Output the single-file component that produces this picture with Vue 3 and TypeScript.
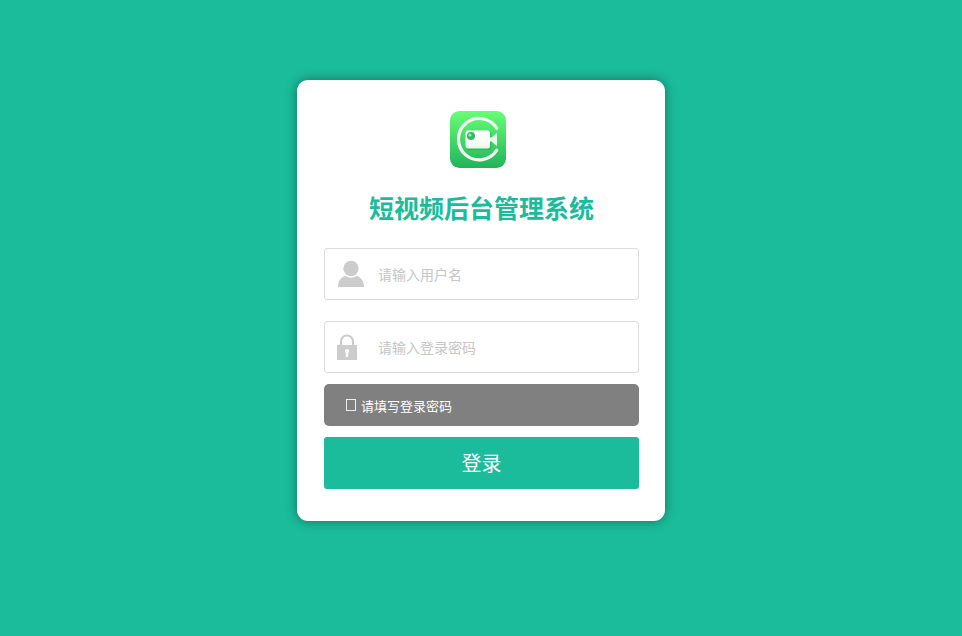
<script setup lang="ts">
import { ref } from 'vue'

const username = ref('')
const password = ref('')
const message = ref('请填写登录密码')

function submit(): void {
  if (!username.value) {
    message.value = '请填写用户名'
  } else if (!password.value) {
    message.value = '请填写登录密码'
  } else {
    message.value = ''
  }
}
</script>

<template>
  <main class="page">
    <form class="card" novalidate @submit.prevent="submit">
      <svg class="logo" viewBox="0 0 56 57" aria-hidden="true">
        <defs>
          <linearGradient id="logo-fill" x1="0" y1="0" x2="0" y2="1">
            <stop offset="0" stop-color="#68fe76" />
            <stop offset="1" stop-color="#22b35b" />
          </linearGradient>
          <linearGradient id="camera-fill" x1="0" y1="0" x2="0" y2="1">
            <stop offset="0.5" stop-color="#ffffff" />
            <stop offset="1" stop-color="#e6f7e9" />
          </linearGradient>
        </defs>
        <rect width="56" height="57" rx="9.500" fill="url(#logo-fill)" />
        <path d="M46.700 17.200A20.700 20.700 0 1 0 46.700 39.200" fill="none" stroke="#f1fff3" stroke-width="3.200" stroke-linecap="round" />
        <rect x="15.500" y="20.500" width="26" height="18.500" rx="3" fill="#168c43" opacity="0.3" />
        <rect x="15.500" y="19.500" width="24.500" height="18" rx="2.500" fill="url(#camera-fill)" />
        <path d="M40 26.500h1.500l5.500-4.500v13l-5.500-4.500H40z" fill="#e6fbe9" />
        <circle cx="21" cy="25" r="4" fill="#2dbd65" />
        <circle cx="20" cy="24" r="1.500" fill="#a5e8b7" />
      </svg>

      <h1 class="title">短视频后台管理系统</h1>

      <label class="field">
        <svg class="icon" viewBox="0 0 28 28" aria-hidden="true">
          <circle cx="14" cy="8.500" r="7.700" />
          <path d="M1 27c0-6 3-9.500 7.200-11.200q5.800 4 11.600 0C24 17.500 27 21 27 27z" />
        </svg>
        <input v-model="username" class="input" type="text" placeholder="请输入用户名" aria-label="用户名" />
      </label>

      <label class="field">
        <svg class="icon" viewBox="0 0 28 28" aria-hidden="true">
          <path d="M4 13V8.500a6 6 0 0 1 12 0V13" fill="none" stroke="#ccc" stroke-width="2.200" />
          <path fill-rule="evenodd" d="M0 12h20v15H0zM10 16a2.200 2.200 0 0 0-1.200 4V24h2.400v-4a2.200 2.200 0 0 0-1.200-4z" />
        </svg>
        <input v-model="password" class="input" type="password" placeholder="请输入登录密码" aria-label="登录密码" />
      </label>

      <p v-if="message" class="message" role="alert">
        <span class="mark" aria-hidden="true"></span>{{ message }}
      </p>

      <button class="submit" type="submit">登录</button>
    </form>
  </main>
</template>

<style>
body {
  margin: 0;
  background: #1bbc9b;
}
</style>

<style scoped>
.page {
  display: flex;
  justify-content: center;
  align-items: flex-start;
  min-height: 100vh;
  box-sizing: border-box;
  padding: 80px 16px;
  background: #1bbc9b;
  font-family: "Noto Sans CJK SC", sans-serif;
}

.card {
  display: flex;
  flex-direction: column;
  box-sizing: border-box;
  width: 100%;
  max-width: 368px;
  padding: 31px 26px 32px 27px;
  border-radius: 11px;
  background: #fff;
  box-shadow: 0 0 12px rgba(0, 0, 0, 0.4);
}

.logo {
  align-self: center;
  width: 56px;
  height: 57px;
  margin-right: 7px;
}

.title {
  margin: 20px 0;
  padding-bottom: 2px;
  color: #1bbc9b;
  font-size: 25px;
  font-weight: 700;
  line-height: 38px;
  text-align: center;
}

.field {
  display: flex;
  align-items: center;
  box-sizing: border-box;
  height: 52px;
  padding: 0 12px;
  border: 1px solid #dcdcdc;
  border-radius: 3px;
}

.field + .field {
  margin-top: 21px;
}

.icon {
  flex: none;
  width: 28px;
  height: 28px;
  fill: #ccc;
}

.input {
  flex: 1;
  min-width: 0;
  height: 48px;
  margin-left: 13px;
  padding: 0;
  border: 0;
  outline: 0;
  background: transparent;
  color: #333;
  font-family: inherit;
  font-size: 14px;
}

.input::placeholder {
  color: #c6c6c6;
  opacity: 1;
}

.message {
  display: flex;
  align-items: center;
  box-sizing: border-box;
  height: 42px;
  margin: 11px 0 0;
  padding: 0 22px;
  border-radius: 5px;
  background: #808080;
  color: #fff;
  font-size: 13px;
}

.mark {
  box-sizing: border-box;
  width: 10px;
  height: 12px;
  margin-right: 5px;
  border: 1px solid #eee;
}

.submit {
  height: 52px;
  margin-top: 11px;
  padding: 0 0 2px;
  border: 0;
  border-radius: 3px;
  background: #1bbc9b;
  color: #fff;
  font-family: inherit;
  font-size: 20px;
  cursor: pointer;
}
</style>
